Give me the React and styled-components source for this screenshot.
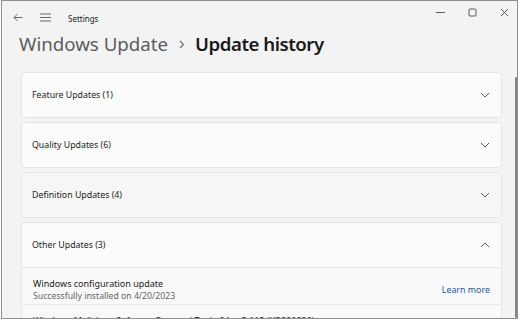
import React from 'react';
import styled, { createGlobalStyle } from 'styled-components';

const GlobalStyle = createGlobalStyle`
  html, body {
    margin: 0;
    padding: 0;
    background: #ffffff;
  }
  body {
    font-family: "Noto Sans", "Open Sans", sans-serif;
    -webkit-font-smoothing: antialiased;
  }
`;

const GROUPS = [
  { title: 'Feature Updates (1)' },
  { title: 'Quality Updates (6)' },
  { title: 'Definition Updates (4)', hovered: true },
  { title: 'Other Updates (3)', open: true },
];

const OTHER_UPDATES = [
  { name: 'Windows configuration update', date: 'Successfully installed on 4/20/2023', link: 'Learn more' },
  { name: 'Windows Malicious Software Removal Tool x64 - v5.112 (KB890830)', date: 'Successfully installed on 4/12/2023' },
];

const Window = styled.div`
  box-sizing: border-box;
  width: 517px;
  height: 319px;
  margin-left: 1px;
  border: 1px solid #8f8f8f;
  background: #f3f3f3;
  display: flex;
  flex-direction: column;
  overflow: hidden;
`;

const TitleBar = styled.div`
  display: flex;
  align-items: center;
  height: 33px;
  flex-shrink: 0;
  padding-left: 9px;
`;

const NavButton = styled.div`
  display: flex;
  align-items: center;
  justify-content: center;
  width: 14px;
  height: 14px;
  margin-right: ${({gap}) => gap}px;
  color: #6a6a6a;
`;

const AppName = styled.span`
  font-size: 8px;
  color: #1b1b1b;
  margin-top: 1px;
`;

const Controls = styled.div`
  display: flex;
  margin-left: auto;
  align-self: flex-start;
  margin-right: -3px;
`;

const ControlButton = styled.div`
  width: 32px;
  height: 22px;
  display: flex;
  align-items: center;
  justify-content: center;
  color: #5a5a5a;
`;

const Heading = styled.h1`
  display: flex;
  align-items: center;
  margin: -4px 0 0;
  padding: 0 0 0 17px;
  height: 26px;
  font-size: 18.7px;
  font-weight: 400;
  color: #5c5c5c;
  white-space: nowrap;
`;

const Crumb = styled.span`
  margin: 2px 10px 0 11px;
  display: flex;
  color: #6a6a6a;
`;

const Current = styled.span`
  font-weight: 600;
  letter-spacing: -0.5px;
  color: #1a1a1a;
`;

const Body = styled.div`
  display: flex;
  flex: 1;
  margin-top: 16px;
  min-height: 0;
`;

const List = styled.div`
  display: flex;
  flex-direction: column;
  gap: 4px;
  width: 481px;
  margin-left: 19px;
`;

const Group = styled.div`
  display: flex;
  flex-direction: column;
`;

const GroupHeader = styled.div`
  box-sizing: border-box;
  display: flex;
  align-items: center;
  height: 46px;
  padding: 0 11px 0 10px;
  background: ${({hovered}) => hovered ? '#f6f6f6' : '#fbfbfb'};
  border: 1px solid #e6e6e6;
  border-radius: ${({open}) => open ? '4px 4px 0 0' : '4px'};
  font-size: 8.8px;
  color: #1b1b1b;
`;

const Chevron = styled.span`
  margin-left: auto;
  display: flex;
  color: #5a5a5a;
`;

const Content = styled.div`
  background: #f9f9f9;
  border: 1px solid #e6e6e6;
  border-top: none;
`;

const UpdateRow = styled.div`
  box-sizing: border-box;
  display: flex;
  align-items: center;
  height: 37px;
  padding: 7px 11px 0 11px;
  border-bottom: 1px solid #eaeaea;
`;

const UpdateInfo = styled.div`
  display: flex;
  flex-direction: column;
`;

const UpdateName = styled.span`
  font-size: 9px;
  color: #1b1b1b;
  line-height: 13px;
`;

const UpdateDate = styled.span`
  font-size: 8.7px;
  color: #656565;
  line-height: 13px;
`;

const Link = styled.a`
  margin-left: auto;
  font-size: 8.9px;
  color: #1e5a94;
  text-decoration: none;
`;

const Scrollbar = styled.div`
  width: 2px;
  margin: 5px 0 0 13px;
  background: #858585;
  border-radius: 1px;
`;

const ChevronIcon = ({up}) => (
  <svg width="10" height="6" viewBox="0 0 10 6">
    <path
      d={up ? 'M1 5 L5 1 L9 5' : 'M1 1 L5 5 L9 1'}
      fill="none"
      stroke="currentColor"
      strokeWidth="1"
    />
  </svg>
);

function App() {
  return (
    <>
      <GlobalStyle />
      <Window>
        <TitleBar>
          <NavButton gap={13}>
            <svg width="10" height="9" viewBox="0 0 10 9">
              <path d="M9.5 4.5 H1 M4.5 1 L1 4.5 L4.5 8" fill="none" stroke="currentColor" strokeWidth="1" />
            </svg>
          </NavButton>
          <NavButton gap={16}>
            <svg width="11" height="9" viewBox="0 0 11 9">
              <path d="M0 1 H11 M0 4.5 H11 M0 8 H11" fill="none" stroke="currentColor" strokeWidth="1" />
            </svg>
          </NavButton>
          <AppName>Settings</AppName>
          <Controls>
            <ControlButton>
              <svg width="9" height="9" viewBox="0 0 9 9">
                <path d="M0 4.5 H9" stroke="currentColor" strokeWidth="1" />
              </svg>
            </ControlButton>
            <ControlButton>
              <svg width="9" height="9" viewBox="0 0 9 9">
                <rect x="1" y="1" width="7" height="7" rx="1" fill="none" stroke="currentColor" strokeWidth="1" />
              </svg>
            </ControlButton>
            <ControlButton>
              <svg width="9" height="9" viewBox="0 0 9 9">
                <path d="M1 1 L8 8 M8 1 L1 8" stroke="currentColor" strokeWidth="1" />
              </svg>
            </ControlButton>
          </Controls>
        </TitleBar>
        <Heading>
          Windows Update
          <Crumb>
            <svg width="6" height="9" viewBox="0 0 6 9">
              <path d="M1 1 L4.5 4.5 L1 8" fill="none" stroke="currentColor" strokeWidth="1.1" />
            </svg>
          </Crumb>
          <Current>Update history</Current>
        </Heading>
        <Body>
          <List>
            {GROUPS.map((group) => (
              <Group key={group.title}>
                <GroupHeader open={group.open} hovered={group.hovered}>
                  {group.title}
                  <Chevron><ChevronIcon up={group.open} /></Chevron>
                </GroupHeader>
                {group.open && (
                  <Content>
                    {OTHER_UPDATES.map((item) => (
                      <UpdateRow key={item.name}>
                        <UpdateInfo>
                          <UpdateName>{item.name}</UpdateName>
                          <UpdateDate>{item.date}</UpdateDate>
                        </UpdateInfo>
                        {item.link && <Link href="#">{item.link}</Link>}
                      </UpdateRow>
                    ))}
                  </Content>
                )}
              </Group>
            ))}
          </List>
          <Scrollbar />
        </Body>
      </Window>
    </>
  );
}

export default App;
